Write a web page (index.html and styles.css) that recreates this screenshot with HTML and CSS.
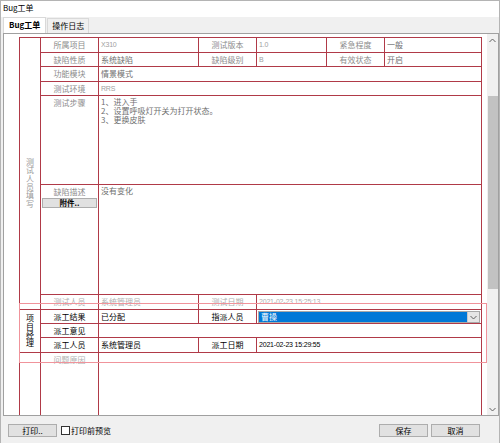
FILE: index.html
```html
<!DOCTYPE html>
<html lang="zh">
<head>
<meta charset="utf-8">
<title>Bug工单</title>
<link rel="stylesheet" href="styles.css">
</head>
<body>
<div class="window">
  <div class="titlebar">Bug工单</div>
  <div class="tabs">
    <div class="tab active">Bug工单</div>
    <div class="tab">操作日志</div>
  </div>
  <div class="panel">
    <div class="viewport">
      <div class="form">
        <div class="c group g1"><span class="vtext">测试人员填写</span></div>
        <div class="c l">所属项目</div>
        <div class="c v num light">X310</div>
        <div class="c l">测试版本</div>
        <div class="c v num light">1.0</div>
        <div class="c l">紧急程度</div>
        <div class="c v">一般</div>

        <div class="c l">缺陷性质</div>
        <div class="c v">系统缺陷</div>
        <div class="c l">缺陷级别</div>
        <div class="c v num light">B</div>
        <div class="c l">有效状态</div>
        <div class="c v">开启</div>

        <div class="c l">功能模块</div>
        <div class="c v span5">情景模式</div>

        <div class="c l">测试环境</div>
        <div class="c v span5 num light">RRS</div>

        <div class="c l top">测试步骤</div>
        <div class="c v span5 multi">
          <div class="line">1、进入手</div>
          <div class="line">2、设置呼吸灯开关为打开状态。</div>
          <div class="line">3、更换皮肤</div>
        </div>

        <div class="c l top desc">缺陷描述<button class="attach" type="button">附件..</button></div>
        <div class="c v span5 descv">没有变化</div>

        <div class="c l faint">测试人员</div>
        <div class="c v faint">系统管理员</div>
        <div class="c l faint">测试日期</div>
        <div class="c v span3 num faint">2021-02-23 15:25:13</div>

        <div class="c group g2"><span class="vtext dark">项目经理</span></div>
        <div class="c l dark">派工结果</div>
        <div class="c v dark">已分配</div>
        <div class="c l dark">指派人员</div>
        <div class="c v span3 selcell">
          <div class="select">
            <span class="selval">曹操</span>
            <span class="selbtn"><svg width="7" height="5" viewBox="0 0 7 5"><path d="M0.5 1 L3.5 4 L6.5 1" fill="none" stroke="#606060" stroke-width="1"/></svg></span>
          </div>
        </div>

        <div class="c l dark">派工意见</div>
        <div class="c v span5"></div>

        <div class="c l dark">派工人员</div>
        <div class="c v dark">系统管理员</div>
        <div class="c l dark">派工日期</div>
        <div class="c v span3 num dark">2021-02-23 15:29:55</div>

        <div class="c group g3"></div>
        <div class="c l top faint">问题原因</div>
        <div class="c v span5"></div>
      </div>
      <div class="pinkbox"></div>
    </div>
    <div class="scrollbar">
      <div class="arrow"><svg width="7" height="5" viewBox="0 0 7 5"><path d="M0.5 4 L3.5 1 L6.5 4" fill="none" stroke="#606060" stroke-width="1"/></svg></div>
      <div class="track"><div class="thumb"></div></div>
      <div class="arrow"><svg width="7" height="5" viewBox="0 0 7 5"><path d="M0.5 1 L3.5 4 L6.5 1" fill="none" stroke="#606060" stroke-width="1"/></svg></div>
    </div>
  </div>
  <div class="footer">
    <button class="btn print" type="button">打印..</button>
    <label class="check"><span class="box"></span>打印前预览</label>
    <div class="spacer"></div>
    <button class="btn" type="button">保存</button>
    <button class="btn" type="button">取消</button>
  </div>
</div>
</body>
</html>
```

FILE: styles.css
```css
* { box-sizing: border-box; margin: 0; padding: 0; }
html, body { width: 500px; height: 443px; overflow: hidden; }
body {
  font-family: "Noto Sans CJK SC", "Microsoft YaHei", sans-serif;
  font-size: 8px;
  color: #000;
  background: #f0f0f0;
}
.window {
  width: 500px;
  height: 443px;
  display: flex;
  flex-direction: column;
  border-top: 1px solid #b4b4b4;
  border-left: 1px solid #b4b4b4;
  border-right: 1px solid #b4b4b4;
}
.titlebar {
  height: 16px;
  background: #fff;
  padding-left: 2px;
  line-height: 14px;
  flex: none;
}
.tabs {
  height: 16px;
  flex: none;
  display: flex;
  align-items: flex-end;
  padding-left: 2px;
  background: #f0f0f0;
}
.tab {
  height: 15px;
  padding: 0 4px;
  line-height: 14px;
  border: 1px solid #d9d9d9;
  border-bottom: none;
  background: #f0f0f0;
  margin-right: 1px;
}
.tab.active {
  background: #fff;
  font-weight: bold;
  height: 16px;
  padding: 0 5px;
}
.panel {
  margin-left: 2px;
  width: 496px;
  height: 383px;
  flex: none;
  border: 1px solid #a0a0a0;
  background: #fff;
  display: flex;
}
.viewport {
  position: relative;
  width: 483px;
  height: 100%;
  overflow: hidden;
  padding: 3px 0 0 15px;
}
.form {
  display: grid;
  width: 463px;
  grid-template-columns: 21px 58px 100px 58px 70px 58px 97px;
  grid-template-rows: 15px 14px 15px 14px 89px 110px 15px 14px 14px 15px 120px;
  border-top: 1px solid #b03a48;
  border-left: 1px solid #b03a48;
}
.c {
  border-right: 1px solid #b03a48;
  border-bottom: 1px solid #b03a48;
  overflow: hidden;
  white-space: nowrap;
}
.group {
  grid-column: 1;
  display: flex;
  justify-content: center;
  align-items: center;
}
.g1 { grid-row: span 7; padding-top: 19px; }
.g2 { grid-row: span 3; }
.g3 { grid-row: span 1; }
.vtext {
  display: block;
  width: 9px;
  white-space: normal;
  word-break: break-all;
  text-align: center;
  color: #999;
  line-height: 8.4px;
}
.vtext.dark { color: #000; }
.l {
  text-align: center;
  color: #8c8c8c;
  line-height: 13px;
}
.v {
  padding-left: 2px;
  color: #6f6f6f;
  line-height: 13px;
}
.span5 { grid-column: span 5; }
.span3 { grid-column: span 3; }
.num {
  font-family: "Liberation Sans", Arial, sans-serif;
  font-size: 7px;
  letter-spacing: -0.2px;
}
.light { color: #a0a0a0; }
.faint { color: #b0b0b0; }
.dark { color: #000; }
.top { line-height: 12px; padding-top: 1px; }
.multi { padding-top: 2px; }
.line { height: 9px; line-height: 8px; }
.descv { line-height: 12px; }
.desc { display: flex; flex-direction: column; align-items: stretch; }
.attach {
  margin: 0 1px 0 1px;
  height: 10px;
  font-family: inherit;
  font-size: 7.5px;
  font-weight: bold;
  line-height: 8px;
  color: #000;
  background: #e1e1e1;
  border: 1px solid #adadad;
}
.selcell { padding: 1px 1px 1px 1px; }
.select {
  display: flex;
  height: 12px;
  border: 1px solid #a8a8a8;
  background: #fff;
}
.selval {
  flex: 1;
  background: #0078d7;
  color: #fff;
  line-height: 10px;
  padding-left: 2px;
}
.selbtn {
  width: 12px;
  display: flex;
  align-items: center;
  justify-content: center;
  background: #e5e5e5;
  border-left: 1px solid #c8c8c8;
}
.pinkbox {
  position: absolute;
  left: 15px;
  top: 269px;
  width: 468px;
  height: 60px;
  border: 1px solid #f0939b;
  pointer-events: none;
}
.scrollbar {
  width: 11px;
  height: 100%;
  background: #f0f0f0;
  display: flex;
  flex-direction: column;
}
.arrow {
  height: 12px;
  display: flex;
  align-items: center;
  justify-content: center;
  flex: none;
}
.track {
  flex: 1;
  padding-top: 50px;
  padding-bottom: 114px;
  display: flex;
}
.thumb {
  flex: 1;
  background: #c2c2c2;
  margin-left: 1px;
}
.footer {
  flex: 1;
  display: flex;
  align-items: flex-start;
  padding: 8px 19px 0 7px;
  background: #f0f0f0;
}
.btn {
  width: 49px;
  height: 13px;
  font-family: inherit;
  font-size: 8px;
  line-height: 11px;
  color: #000;
  background: #e1e1e1;
  border: 1px solid #adadad;
  margin-left: 3px;
}
.btn.print { margin-left: 0; }
.check {
  display: flex;
  align-items: center;
  height: 13px;
  margin-left: 4px;
}
.box {
  width: 9px;
  height: 9px;
  border: 1px solid #333;
  background: #fff;
  margin-right: 1px;
}
.spacer { flex: 1; }
```
